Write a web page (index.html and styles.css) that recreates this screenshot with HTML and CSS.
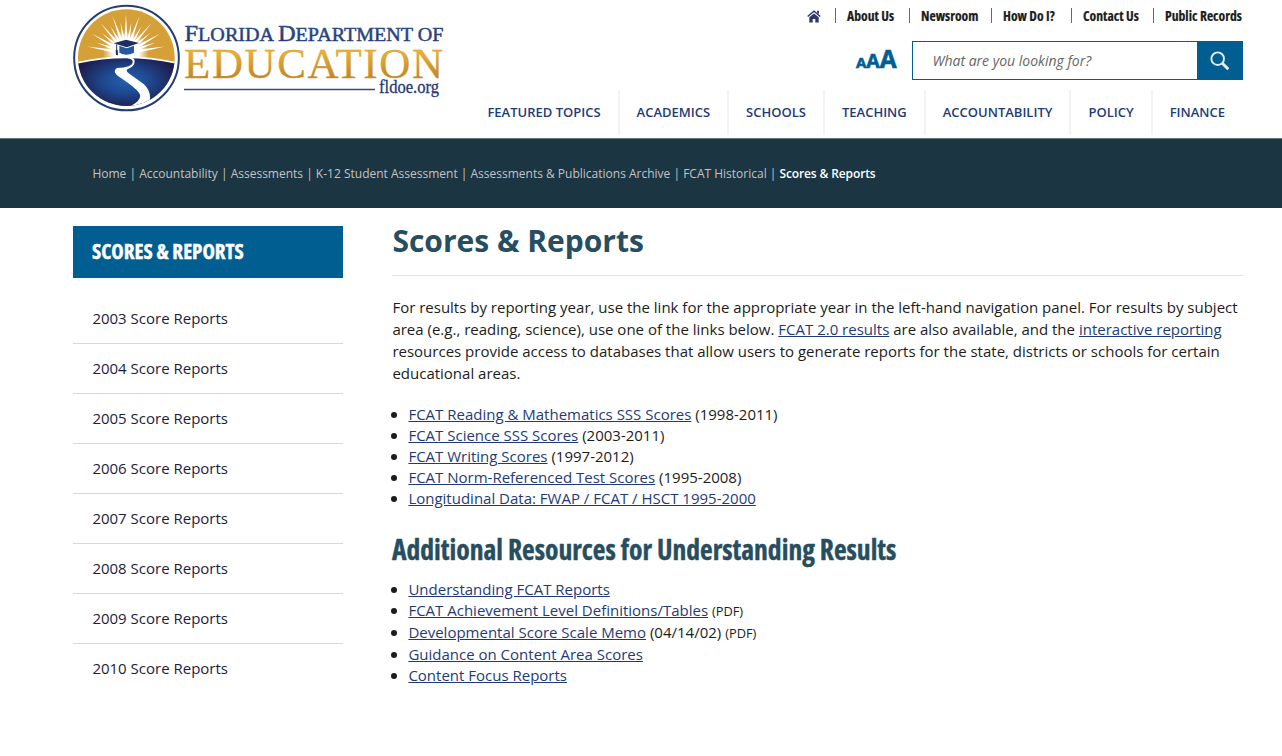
FILE: index.html
```html
<!DOCTYPE html>
<html lang="en">
<head>
<meta charset="utf-8">
<title>Scores &amp; Reports</title>
<link rel="stylesheet" href="styles.css">
</head>
<body>
<header class="header">
  <a class="logo">
    <svg width="372" height="108" viewBox="73 4 372 108">
      <defs>
        <linearGradient id="gold" x1="0" y1="0" x2="0" y2="1"><stop offset=".15" stop-color="#f0b93a"/><stop offset=".85" stop-color="#bd8128"/></linearGradient>
        <linearGradient id="navy" x1="0" y1="0" x2="0" y2="1"><stop offset="0" stop-color="#2d5a9c"/><stop offset="1" stop-color="#202a61"/></linearGradient>
        <radialGradient id="land" cx=".5" cy=".42" r=".5"><stop offset="0" stop-color="#2461ad"/><stop offset=".45" stop-color="#1e4890"/><stop offset="1" stop-color="#1d1d4c"/></radialGradient>
        <radialGradient id="sun"><stop offset=".55" stop-color="#fff"/><stop offset="1" stop-color="#fff" stop-opacity="0"/></radialGradient>
        <clipPath id="disc"><circle cx="199" cy="173" r="145"/></clipPath>
        <path id="long" d="M192 150L198 42L204 150Z"/>
        <path id="short" d="M192 150L198 66L204 150Z"/>
      </defs>
      <g transform="translate(60 0) scale(.33333)">
        <circle cx="199.500" cy="174" r="157" fill="#fff" stroke="#243d77" stroke-width="6"/>
        <g clip-path="url(#disc)">
          <rect x="50" y="20" width="300" height="310" fill="#d6a038"/>
          <circle cx="198" cy="160" r="68" fill="url(#sun)"/>
          <g fill="#fff">
            <use href="#long" transform="rotate(-80 198 160)"/><use href="#short" transform="rotate(-70 198 160)"/>
            <use href="#long" transform="rotate(-60 198 160)"/><use href="#short" transform="rotate(-50 198 160)"/>
            <use href="#long" transform="rotate(-40 198 160)"/><use href="#short" transform="rotate(-30 198 160)"/>
            <use href="#long" transform="rotate(-20 198 160)"/><use href="#short" transform="rotate(-10 198 160)"/>
            <use href="#long"/><use href="#short" transform="rotate(10 198 160)"/>
            <use href="#long" transform="rotate(20 198 160)"/><use href="#short" transform="rotate(30 198 160)"/>
            <use href="#long" transform="rotate(40 198 160)"/><use href="#short" transform="rotate(50 198 160)"/>
            <use href="#long" transform="rotate(60 198 160)"/><use href="#short" transform="rotate(70 198 160)"/>
            <use href="#long" transform="rotate(80 198 160)"/>
          </g>
          <path d="M45 190Q198 154 355 190V340H45Z" fill="url(#land)" stroke="#fff" stroke-width="5"/>
          <path d="M203 171Q224 172 224 184Q224 199 204 207Q194 212 208 221L252 253Q279 279 266 314L186 330Q246 307 240 284Q234 267 177 230Q155 214 171 204Q218 202 218 186Q218 177 203 175Z" fill="#fff"/>
        </g>
        <path d="M161 130L198 119L237 129L200 142Z" fill="#1d2d60"/>
        <path d="M178 137L200 145L222 137V158Q198 170 178 158Z" fill="#2558a0"/>
        <path d="M170 133V151" stroke="#1d2d60" stroke-width="3"/><path d="M167 150H173L174 166L168 165Z" fill="#1d2d60"/>
      </g>
      <g font-family="Liberation Serif, serif">
        <text y="41" font-size="18.500" fill="url(#navy)" stroke="#29467f" stroke-width=".45" textLength="259" lengthAdjust="spacingAndGlyphs" x="184.500"><tspan font-size="22.500">F</tspan>LORIDA <tspan font-size="22.500">D</tspan>EPARTMENT OF</text>
        <text x="184" y="78" font-size="43" textLength="259" lengthAdjust="spacing" fill="url(#gold)" stroke="#d29a30" stroke-width=".3">EDUCATION</text>
        <text x="379" y="93" font-size="18" textLength="60" lengthAdjust="spacingAndGlyphs" fill="#26386f" stroke="#26386f" stroke-width=".3">fldoe.org</text>
      </g>
      <path d="M184 89.500H375" stroke="#344b82" stroke-width="1.300"/>
    </svg>
  </a>
  <div class="tools">
    <nav class="top-links">
      <a class="home"><svg width="14" height="13" viewBox="0 0 14 13"><path d="M.7 6.500L7 1.200L13.300 6.500" fill="none" stroke="#32366b" stroke-width="1.400"/><path d="M10 .8H12V4L10 2.500ZM2.300 7.300L7 3.400L11.700 7.300V12.500H8.300V9H5.700V12.500H2.300Z" fill="#32366b"/></svg></a>
      <a class="l1"><span>About Us</span></a><a class="l2"><span>Newsroom</span></a><a class="l3"><span>How Do I?</span></a><a class="l4"><span>Contact Us</span></a><a class="l5"><span>Public Records</span></a>
    </nav>
    <div class="search-row">
      <div class="sizes"><span>A</span><span>A</span><span>A</span></div>
      <div class="search"><span class="placeholder">What are you looking for?</span>
        <span class="go"><svg width="20" height="20" viewBox="0 0 20 20" fill="none" stroke="#e3edf5"><circle cx="7.700" cy="7.700" r="6.300" stroke-width="1.900"/><path d="M12.300 12.300L18.300 18.300" stroke-width="3"/></svg></span>
      </div>
    </div>
    <nav class="main-nav"><a>FEATURED TOPICS</a><a>ACADEMICS</a><a>SCHOOLS</a><a>TEACHING</a><a>ACCOUNTABILITY</a><a>POLICY</a><a>FINANCE</a></nav>
  </div>
</header>
<div class="breadcrumb">Home | Accountability | Assessments | K-12 Student Assessment | Assessments &amp; Publications Archive | FCAT Historical |&nbsp;<b>Scores &amp; Reports</b></div>
<div class="page">
  <aside class="sidebar">
    <h2><span>SCORES &amp; REPORTS</span></h2>
    <ul><li>2003 Score Reports</li><li>2004 Score Reports</li><li>2005 Score Reports</li><li>2006 Score Reports</li><li>2007 Score Reports</li><li>2008 Score Reports</li><li>2009 Score Reports</li><li>2010 Score Reports</li></ul>
  </aside>
  <main class="content">
    <h1>Scores &amp; Reports</h1>
    <p>For results by reporting year, use the link for the appropriate year in the left-hand navigation panel. For results by subject<br>area (e.g., reading, science), use one of the links below. <a>FCAT 2.0 results</a> are also available, and the <a>interactive reporting</a><br>resources provide access to databases that allow users to generate reports for the state, districts or schools for certain<br>educational areas.</p>
    <ul class="links">
      <li><a>FCAT Reading &amp; Mathematics SSS Scores</a> (1998-2011)</li>
      <li><a>FCAT Science SSS Scores</a> (2003-2011)</li>
      <li><a>FCAT Writing Scores</a> (1997-2012)</li>
      <li><a>FCAT Norm-Referenced Test Scores</a> (1995-2008)</li>
      <li><a>Longitudinal Data: FWAP / FCAT / HSCT 1995-2000</a></li>
    </ul>
    <h2><span>Additional Resources for Understanding Results</span></h2>
    <ul class="links resources">
      <li><a>Understanding FCAT Reports</a></li>
      <li><a>FCAT Achievement Level Definitions/Tables</a> <small>(PDF)</small></li>
      <li><a>Developmental Score Scale Memo</a> (04/14/02) <small>(PDF)</small></li>
      <li><a>Guidance on Content Area Scores</a></li>
      <li><a>Content Focus Reports</a></li>
    </ul>
  </main>
</div>
</body>
</html>
```
FILE: styles.css
```css
* { box-sizing: border-box; }
body { margin: 0; height: 756px; overflow: hidden; background: #fff; color: #1c1c1c; font: 15px/22px "Open Sans", sans-serif; }
ul { list-style: none; margin: 0; padding: 0; }
svg { display: block; }
.header { display: flex; justify-content: space-between; height: 139px; padding: 0 39px 0 73px; border-bottom: 1px solid #6c777c; }
.logo { padding-top: 4px; }
.tools { display: flex; flex-direction: column; align-items: flex-end; }
.top-links { display: flex; align-items: center; height: 15px; margin-top: 8px; font-size: 14px; font-weight: 700; font-stretch: 75%; }
.top-links a { height: 15px; line-height: 15px; white-space: nowrap; }
.top-links a + a { border-left: 1px solid #2b7fa6; padding-left: 10.6px; }
.top-links span { display: inline-block; transform: scaleX(.975); transform-origin: left center; -webkit-text-stroke: .2px #1c1c1c; }
.home { width: 28px; padding-top: 2px; }
.l1 { width: 74px; }
.l2 { width: 82px; }
.l3 { width: 80px; }
.l4 { width: 82px; }
.l5 { width: 90px; }
.search-row { display: flex; margin-top: 18px; }
.sizes { display: flex; align-items: baseline; padding-top: 3px; width: 56px; color: #005e91; font-weight: 700; line-height: 30px; -webkit-text-stroke: .6px #005e91; }
.sizes span:nth-child(1) { font-size: 15px; }
.sizes span:nth-child(2) { font-size: 19.5px; }
.sizes span:nth-child(3) { font-size: 24.5px; }
.search { display: flex; width: 331px; height: 39px; border: 1px solid #005e91; }
.placeholder { flex: 1; padding-left: 19.500px; font-size: 14px; font-style: italic; line-height: 37px; color: #666; }
.go { display: flex; align-items: center; justify-content: center; width: 45px; background: #005e91; }
.main-nav { display: flex; height: 45px; margin-top: 10px; color: #1f3b77; font-size: 13px; font-weight: 600; line-height: 44px; }
.main-nav a { padding: 0 17px; white-space: nowrap; }
.main-nav a + a { border-left: 2px solid #f3f3f3; }
.main-nav a:last-child { padding-right: 18px; }
.breadcrumb { height: 69px; padding-left: 92.400px; background: #1b3542; color: #c4c4c4; font-size: 12px; line-height: 70px; white-space: nowrap; }
.breadcrumb b { color: #fff; font-weight: 600; letter-spacing: -.13px; }
.page { display: grid; grid-template-columns: 270px 850.6px; column-gap: 49.4px; padding: 18px 0 0 73px; }
.sidebar h2 { height: 52px; margin: 0 0 16px; padding-left: 19px; background: #005e91; color: #fff; font-size: 21px; line-height: 50px; font-stretch: 75%; white-space: nowrap; -webkit-text-stroke: .4px #fff; }
.content h2 span { display: inline-block; transform: scaleX(.985); transform-origin: left center; }
.sidebar li { height: 50px; padding-left: 19.400px; line-height: 49px; color: #1c1c3c; border-bottom: 1px solid #d8d8d8; }
.sidebar li:last-child { border-bottom: 0; }
.content h1 { height: 50px; margin: 0; border-bottom: 1px solid #e3e3e3; color: #274d60; font-size: 30px; line-height: 30px; white-space: nowrap; }
.content p { margin: 20px 0 20px; white-space: nowrap; }
.content a { color: #1f3b77; text-decoration: underline; }
.links li { position: relative; height: 21px; line-height: 21px; padding-left: 16px; }
.links li::before { content: ""; position: absolute; left: -1px; top: 8px; width: 6px; height: 6px; border-radius: 50%; background: #1c1c1c; }
.content h2 { height: 30px; margin: 25px 0 15px; color: #274d60; font-size: 28px; line-height: 30px; font-stretch: 75%; white-space: nowrap; -webkit-text-stroke: .4px #274d60; }
.resources li:nth-child(2), .resources li:nth-child(3) { height: 22px; }
small { font-size: 12.800px; }
```
